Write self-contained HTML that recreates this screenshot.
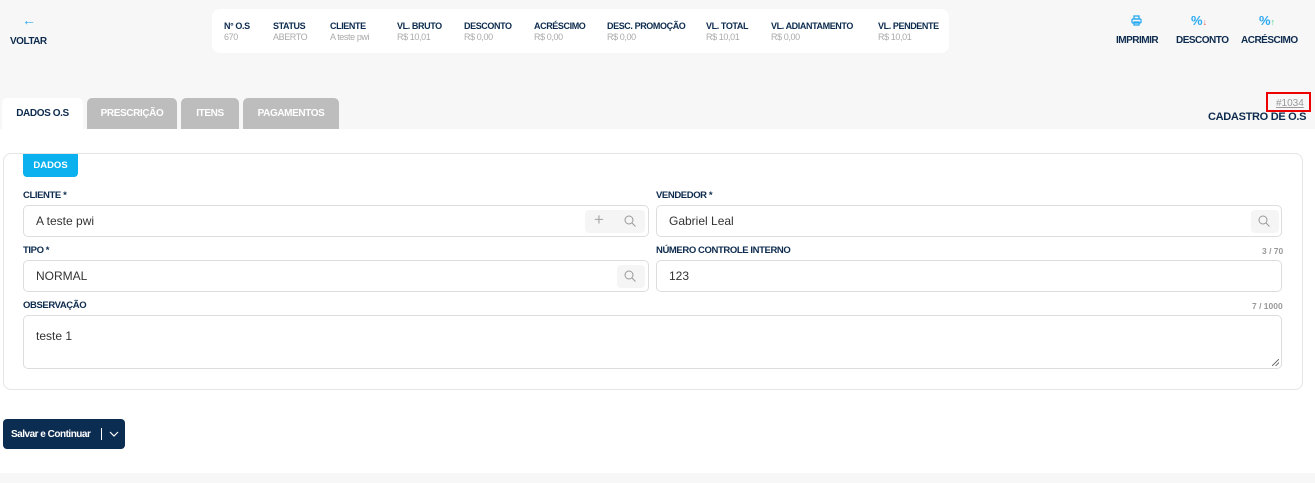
<!DOCTYPE html>
<html><head><meta charset="utf-8"><style>
*{box-sizing:border-box;margin:0;padding:0}
body{width:1315px;height:483px;background:#f7f7f7;font-family:"Liberation Sans",sans-serif;position:relative;overflow:hidden;color:#0d2b4e}
.a{position:absolute}
.main{position:absolute;left:0;top:129px;width:1315px;height:344px;background:#fff}
.hdr{left:212px;top:9px;width:737px;height:44px;background:#fff;border-radius:8px}
.col{position:absolute;top:12px;font-size:9px;line-height:11px;letter-spacing:-0.4px}
.col b{display:block;color:#0d2b4e}
.col span{color:#aaa}
.tb{position:absolute;top:98px;height:31px;border-radius:5px 5px 0 0;font-size:10px;font-weight:bold;color:#fff;text-align:center;line-height:31px;background:#bdbdbd;letter-spacing:-0.4px}
.card{left:3px;top:153px;width:1300px;height:237px;border:1px solid #e5e5e5;border-radius:8px;background:#fff}
.lbl{position:absolute;font-size:9.5px;font-weight:bold;color:#0d2b4e;letter-spacing:-0.4px}
.cnt{position:absolute;font-size:8.5px;font-weight:bold;color:#999}
.inp{position:absolute;height:32px;border:1px solid #ddd;border-radius:5px;background:#fff;font-size:12px;color:#333;padding-left:12px;line-height:30px}
.ib{position:absolute;top:4px;height:23px;background:#f5f5f5;border-radius:4px}
.act{position:absolute;top:44px;font-size:10px;font-weight:bold;color:#0d2b4e;letter-spacing:-0.5px}
</style></head><body>
<div class="main"></div>
<div class="a" style="left:22px;top:12px;color:#29a9f0;font-size:14px">&#8592;</div>
<div class="a" style="left:10px;top:36px;font-size:10px;font-weight:bold;letter-spacing:-0.5px">VOLTAR</div>

<div class="a hdr">
<div class="col" style="left:12px"><b>N° O.S</b><span>670</span></div>
<div class="col" style="left:61px"><b>STATUS</b><span>ABERTO</span></div>
<div class="col" style="left:118px"><b>CLIENTE</b><span>A teste pwi</span></div>
<div class="col" style="left:185px"><b>VL. BRUTO</b><span>R$ 10,01</span></div>
<div class="col" style="left:252px"><b>DESCONTO</b><span>R$ 0,00</span></div>
<div class="col" style="left:322px"><b>ACRÉSCIMO</b><span>R$ 0,00</span></div>
<div class="col" style="left:395px"><b>DESC. PROMOÇÃO</b><span>R$ 0,00</span></div>
<div class="col" style="left:494px"><b>VL. TOTAL</b><span>R$ 10,01</span></div>
<div class="col" style="left:559px"><b>VL. ADIANTAMENTO</b><span>R$ 0,00</span></div>
<div class="col" style="left:666px"><b>VL. PENDENTE</b><span>R$ 10,01</span></div>
</div>

<svg class="a" style="left:1131px;top:15px" width="11" height="11" viewBox="0 0 11 11" fill="none" stroke="#29a9f0" stroke-width="1.3"><rect x="3" y="1" width="5" height="3"/><rect x="1" y="4" width="9" height="4" rx="1"/><rect x="3" y="7" width="5" height="3"/></svg>
<div class="act" style="left:1116px;top:35px">IMPRIMIR</div>
<div class="a" style="left:1191px;top:13px;font-size:13px;font-weight:bold;color:#29a9f0">%<span style="color:#f06060;font-size:9px">↓</span></div>
<div class="act" style="left:1176px;top:35px">DESCONTO</div>
<div class="a" style="left:1259px;top:13px;font-size:13px;font-weight:bold;color:#29a9f0">%<span style="color:#3dd68c;font-size:9px">↑</span></div>
<div class="act" style="left:1241px;top:35px">ACRÉSCIMO</div>

<div class="tb" style="left:2px;width:81px;background:#fff;color:#0d2b4e">DADOS O.S</div>
<div class="tb" style="left:87px;width:90px">PRESCRIÇÃO</div>
<div class="tb" style="left:181px;width:58px">ITENS</div>
<div class="tb" style="left:243px;width:96px">PAGAMENTOS</div>

<div class="a" style="left:1266px;top:92px;width:45px;height:20px;border:2px solid #e00"></div>
<div class="a" style="left:1276px;top:98px;font-size:10px;color:#999;text-decoration:underline">#1034</div>
<div class="a" style="left:1208px;top:111px;font-size:11px;font-weight:bold;letter-spacing:-0.3px">CADASTRO DE O.S</div>

<div class="a card"></div>
<div class="a" style="left:23px;top:154px;width:55px;height:23px;background:#0bb0ee;border-radius:0 0 4px 4px;color:#fff;font-size:9.5px;font-weight:bold;text-align:center;line-height:23px">DADOS</div>

<div class="lbl" style="left:23px;top:190px">CLIENTE *</div>
<div class="inp" style="left:23px;top:205px;width:626px">A teste pwi
<div class="ib" style="left:561px;width:60px"></div>
<span class="a" style="left:570px;top:-1px;font-size:17px;color:#aaa">+</span>
<svg class="a" style="left:600px;top:9px" width="12" height="12" viewBox="0 0 12 12" fill="none" stroke="#999" stroke-width="1"><circle cx="5" cy="5" r="4"/><path d="M8 8l3.5 3.5"/></svg>
</div>
<div class="lbl" style="left:656px;top:190px">VENDEDOR *</div>
<div class="inp" style="left:656px;top:205px;width:626px">Gabriel Leal
<div class="ib" style="left:594px;width:28px"></div>
<svg class="a" style="left:601px;top:9px" width="12" height="12" viewBox="0 0 12 12" fill="none" stroke="#999" stroke-width="1"><circle cx="5" cy="5" r="4"/><path d="M8 8l3.5 3.5"/></svg>
</div>

<div class="lbl" style="left:23px;top:245px">TIPO *</div>
<div class="inp" style="left:23px;top:260px;width:626px">NORMAL
<div class="ib" style="left:593px;width:28px"></div>
<svg class="a" style="left:600px;top:9px" width="12" height="12" viewBox="0 0 12 12" fill="none" stroke="#999" stroke-width="1"><circle cx="5" cy="5" r="4"/><path d="M8 8l3.5 3.5"/></svg>
</div>
<div class="lbl" style="left:656px;top:245px">NÚMERO CONTROLE INTERNO</div>
<div class="cnt" style="left:1262px;top:246px">3 / 70</div>
<div class="inp" style="left:656px;top:260px;width:626px">123</div>

<div class="lbl" style="left:23px;top:300px">OBSERVAÇÃO</div>
<div class="cnt" style="left:1252px;top:301px">7 / 1000</div>
<div class="inp" style="left:23px;top:315px;width:1259px;height:54px;line-height:40px">teste 1
<svg class="a" style="right:2px;bottom:2px" width="7" height="7" viewBox="0 0 7 7" stroke="#555" stroke-width="0.8"><path d="M0 7L7 0M3.5 7L7 3.5"/></svg>
</div>

<div class="a" style="left:3px;top:419px;width:122px;height:30px;background:#0c2d52;border-radius:4px;color:#fff;font-size:10px;font-weight:bold;line-height:31px;padding-left:8px;letter-spacing:-0.5px">Salvar e Continuar
<span class="a" style="left:98px;top:9px;width:1px;height:12px;background:#fff"></span>
<svg class="a" style="left:106px;top:12px" width="10" height="6" viewBox="0 0 10 6" fill="none" stroke="#fff" stroke-width="1.2"><path d="M1 1l4 4 4-4"/></svg>
</div>
</body></html>
